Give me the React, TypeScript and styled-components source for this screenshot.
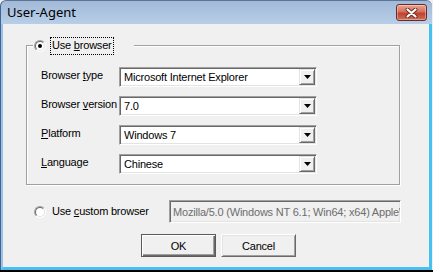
import React from "react";
import styled, { createGlobalStyle } from "styled-components";

const Global = createGlobalStyle`
  html, body { margin: 0; padding: 0; background: #f0f0f0; }
  body { font-family: "Liberation Sans", Arial, sans-serif; font-size: 11px; letter-spacing: -0.2px; color: #000; }
  * { box-sizing: border-box; }
`;

const Page = styled.div`
  width: 433px;
  height: 272px;
  display: flex;
  flex-direction: column;
  overflow: hidden;
`;

const Window = styled.div`
  width: 432px;
  height: 270px;
  display: flex;
  flex-direction: column;
  background: linear-gradient(#a2bad8, #b8cfe9 24px);
  border-radius: 6px 6px 0 0;
  border-top: 1px solid #5d7595;
  border-left: 1px solid #3d6598;
`;

const BottomStrip = styled.div`
  width: 433px;
  height: 2px;
  background: #000;
`;

const TitleBar = styled.div`
  height: 23px;
  display: flex;
  align-items: flex-start;
  padding-left: 6px;
`;

const Title = styled.span`
  font-family: "Noto Sans", "Open Sans", sans-serif;
  font-size: 13px;
  letter-spacing: 0;
  line-height: 23px;
  color: #000;
`;

const CloseButton = styled.div`
  margin-left: auto;
  margin-right: 5px;
  margin-top: 3px;
  width: 31px;
  height: 17px;
  border: 1px solid #6b2a22;
  border-radius: 3px;
  background: linear-gradient(#e8a595, #d5705b 45%, #c0412f 55%, #cd6f5a);
  box-shadow: inset 0 0 0 1px rgba(255, 255, 255, 0.35);
  display: flex;
  align-items: center;
  justify-content: center;
`;

const Client = styled.div`
  flex: 1;
  background: #f0f0f0;
  border-left: 2px solid #9fc0e4;
  border-right: 3px solid #46c0ee;
  border-bottom: 3px solid #46c0ee;
  display: flex;
  flex-direction: column;
  padding: 21px 0 0 23px;
`;

const Group = styled.div`
  position: relative;
  width: 374px;
  height: 140px;
  border: 1px solid #a0a0a0;
  box-shadow: inset 1px 1px 0 #fff, 1px 1px 0 #fff;
  padding: 21px 0 10px 14px;
  display: flex;
  flex-direction: column;
  gap: 9px;
`;

const Legend = styled.div`
  position: absolute;
  top: -9px;
  left: 6px;
  width: 101px;
  height: 18px;
  background: #f0f0f0;
  display: flex;
  align-items: center;
  padding-left: 1px;
`;

const RadioOuter = styled.span`
  width: 12px;
  height: 12px;
  flex: none;
  border-radius: 50%;
  border: 1px solid;
  border-color: #a0a0a0 #fff #fff #a0a0a0;
  display: flex;
`;

const RadioInner = styled.span<{ $checked?: boolean }>`
  flex: 1;
  border-radius: 50%;
  border: 1px solid;
  border-color: #696969 #e3e3e3 #e3e3e3 #696969;
  background: #fff;
  display: flex;
  align-items: center;
  justify-content: center;
  &::after {
    content: "";
    display: ${(p) => (p.$checked ? "block" : "none")};
    width: 4px;
    height: 4px;
    border-radius: 50%;
    background: #000;
  }
`;

const FocusLabel = styled.span`
  margin-left: 4px;
  padding: 1px 1px 2px;
  border: 1px dotted #000;
  line-height: 13px;
`;

const U = styled.u`
  text-decoration: underline;
  text-underline-offset: 1px;
`;

const Row = styled.div`
  display: flex;
  align-items: flex-start;
  height: 20px;
`;

const FieldLabel = styled.span`
  width: 78px;
  line-height: 13px;
  padding-top: 2px;
  white-space: nowrap;
`;

const Combo = styled.div`
  width: 198px;
  height: 20px;
  border: 1px solid;
  border-color: #a0a0a0 #fff #fff #a0a0a0;
  box-shadow: inset 1px 1px 0 #696969, inset -1px -1px 0 #e3e3e3;
  background: #fff;
  display: flex;
  align-items: center;
  padding: 1px;
`;

const ComboText = styled.span`
  flex: 1;
  padding-left: 3px;
  line-height: 13px;
  white-space: nowrap;
  overflow: hidden;
`;

const DropButton = styled.span`
  width: 16px;
  height: 16px;
  flex: none;
  background: #f0f0f0;
  border: 1px solid;
  border-color: #e3e3e3 #696969 #696969 #e3e3e3;
  box-shadow: inset 1px 1px 0 #fff, inset -1px -1px 0 #a0a0a0;
  display: flex;
  align-items: center;
  justify-content: center;
`;

const CustomRow = styled.div`
  margin-top: 15px;
  height: 23px;
  display: flex;
  align-items: center;
  padding-left: 8px;
`;

const CustomLabel = styled.span`
  width: 123px;
  padding-left: 6px;
  line-height: 13px;
  white-space: nowrap;
`;

const TextBox = styled.div`
  width: 232px;
  height: 23px;
  border: 1px solid;
  border-color: #a0a0a0 #fff #fff #a0a0a0;
  box-shadow: inset 1px 1px 0 #696969, inset -1px -1px 0 #e3e3e3;
  background: #f0f0f0;
  color: #6d6d6d;
  padding: 0 0 0 3px;
  display: flex;
  align-items: center;
  white-space: nowrap;
  overflow: hidden;
`;

const ButtonRow = styled.div`
  margin-top: 11px;
  padding-left: 115px;
  display: flex;
  gap: 5px;
`;

const Button = styled.div<{ $default?: boolean }>`
  width: 75px;
  height: 23px;
  background: #f0f0f0;
  display: flex;
  align-items: center;
  justify-content: center;
  border: 1px solid;
  border-color: ${(p) => (p.$default ? "#5a5a5a" : "#fff #696969 #696969 #fff")};
  box-shadow: ${(p) =>
    p.$default
      ? "inset 1px 1px 0 #fff, inset -1px -1px 0 #696969, inset -2px -2px 0 #a0a0a0"
      : "inset 1px 1px 0 #e3e3e3, inset -1px -1px 0 #a0a0a0"};
`;

const Radio = ({ checked }: { checked?: boolean }) => (
  <RadioOuter>
    <RadioInner $checked={checked} />
  </RadioOuter>
);

const Arrow = () => (
  <svg width="7" height="4" viewBox="0 0 7 4">
    <polygon points="0,0 7,0 3.5,4" fill="#000" />
  </svg>
);

const rows: { pre: string; key: string; post: string; value: string }[] = [
  { pre: "Browser ", key: "t", post: "ype", value: "Microsoft Internet Explorer" },
  { pre: "Browser ", key: "v", post: "ersion", value: "7.0" },
  { pre: "", key: "P", post: "latform", value: "Windows 7" },
  { pre: "", key: "L", post: "anguage", value: "Chinese" },
];

export default function App() {
  return (
    <Page>
      <Global />
      <Window>
        <TitleBar>
          <Title>User-Agent</Title>
          <CloseButton>
            <svg width="13" height="10" viewBox="0 0 13 10">
              <path d="M2.5 1.5 L10.5 8.5 M10.5 1.5 L2.5 8.5" stroke="#6a2a20" strokeWidth="4" strokeLinecap="round" />
              <path d="M2.5 1.5 L10.5 8.5 M10.5 1.5 L2.5 8.5" stroke="#fff" strokeWidth="2.2" strokeLinecap="round" />
            </svg>
          </CloseButton>
        </TitleBar>
        <Client>
          <Group>
            <Legend>
              <Radio checked />
              <FocusLabel>
                Use <U>b</U>rowser
              </FocusLabel>
            </Legend>
            {rows.map((r) => (
              <Row key={r.value}>
                <FieldLabel>
                  {r.pre}
                  <U>{r.key}</U>
                  {r.post}
                </FieldLabel>
                <Combo>
                  <ComboText>{r.value}</ComboText>
                  <DropButton>
                    <Arrow />
                  </DropButton>
                </Combo>
              </Row>
            ))}
          </Group>
          <CustomRow>
            <Radio />
            <CustomLabel>
              Use <U>c</U>ustom browser
            </CustomLabel>
            <TextBox>Mozilla/5.0 (Windows NT 6.1; Win64; x64) AppleWebKit/537.36</TextBox>
          </CustomRow>
          <ButtonRow>
            <Button $default>OK</Button>
            <Button>Cancel</Button>
          </ButtonRow>
        </Client>
      </Window>
      <BottomStrip />
    </Page>
  );
}
